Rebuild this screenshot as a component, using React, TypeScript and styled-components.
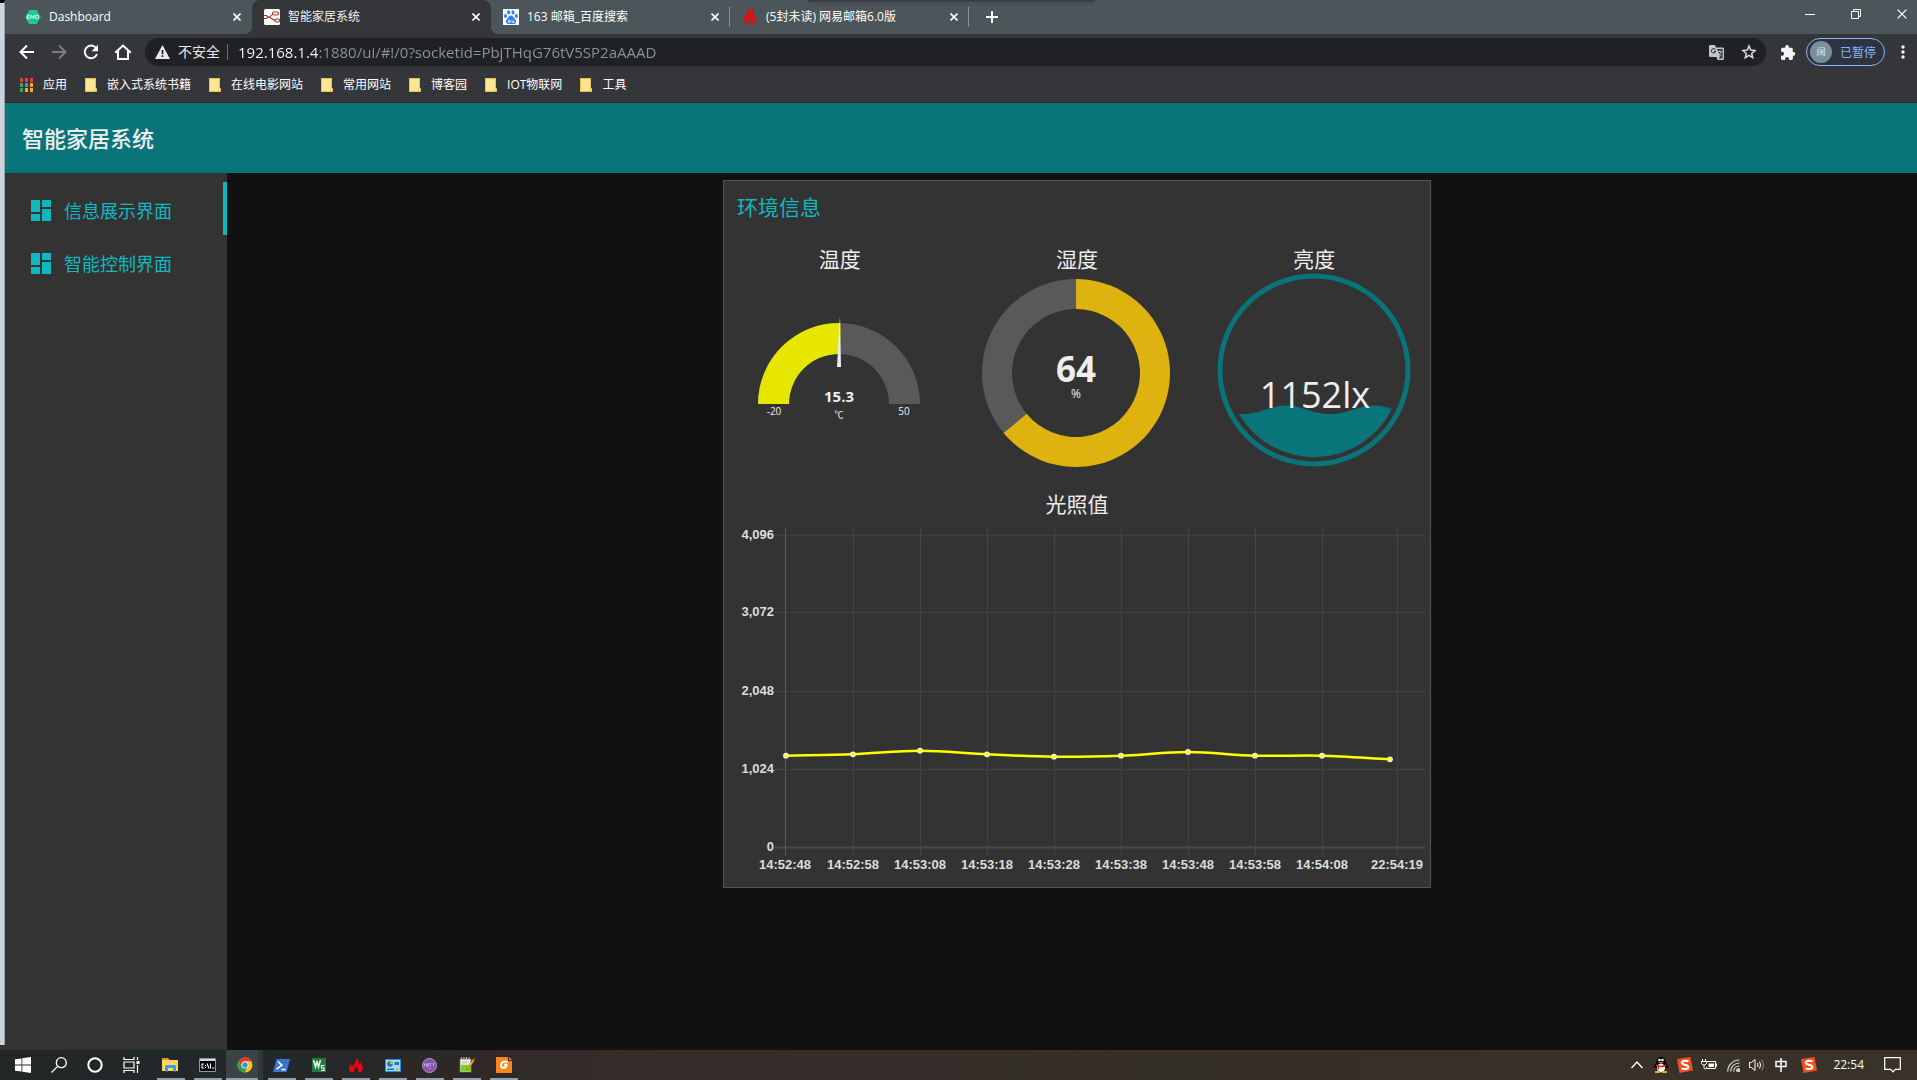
import React from "react";
import styled, { createGlobalStyle, css } from "styled-components";

const GlobalStyle = createGlobalStyle`
  * { box-sizing: border-box; }
  html, body { margin: 0; padding: 0; background: #111111; }
  body { font-family: "Open Sans", "Noto Sans CJK SC", sans-serif; color: #eeeeee; }
  button { border: 0; padding: 0; margin: 0; background: none; color: inherit; font: inherit; display: flex; align-items: center; }
  a { color: inherit; text-decoration: none; }
  svg { display: block; flex: none; }
`;

const Desktop = styled.div`
  min-height: 100vh;
  display: flex;
  flex-direction: column;
`;

const Screen = styled.div`
  flex: 1;
  display: flex;
  background: #3a3428;
`;

const WindowBehind = styled.div`
  width: 5px;
  margin-bottom: 5px;
  background: #ccd4e0;
  border-top: 3px solid #000000;
  border-right: 1px solid #9aa2b0;
`;

const BrowserWindow = styled.div`
  flex: 1;
  min-width: 0;
  display: flex;
  flex-direction: column;
`;

/* ---------- browser chrome ---------- */

const TabStrip = styled.div`
  position: relative;
  height: 34px;
  display: flex;
  align-items: stretch;
  padding-left: 8px;
  background: #4c555a;
`;

const TopShadow = styled.span`
  position: absolute;
  top: 0;
  left: 42%;
  width: 15%;
  height: 2px;
  background: linear-gradient(#30353a, #454d52);
  box-shadow: 0 0 4px #3a4146;
`;

const tabFeet = css`
  &::before,
  &::after {
    content: "";
    position: absolute;
    bottom: 0;
    width: 8px;
    height: 8px;
  }
  &::before {
    right: 100%;
    background: radial-gradient(circle at 0 0, transparent 8px, #35363a 8px);
  }
  &::after {
    left: 100%;
    background: radial-gradient(circle at 100% 0, transparent 8px, #35363a 8px);
  }
`;

const tabDivider = css`
  &::after {
    content: "";
    position: absolute;
    right: 0;
    top: 7px;
    width: 1px;
    height: 20px;
    background: #8b9195;
  }
`;

const Tab = styled.div<{ $active?: boolean; $divider?: boolean }>`
  position: relative;
  width: 239px;
  display: flex;
  align-items: center;
  padding: 0 11px 0 12px;
  color: ${(p) => (p.$active ? "#f1f3f4" : "#ffffff")};
  background: ${(p) => (p.$active ? "#35363a" : "transparent")};
  border-radius: 8px 8px 0 0;
  ${(p) => p.$active && tabFeet}
  ${(p) => p.$divider && tabDivider}
`;

const TabTitle = styled.button`
  flex: 1;
  gap: 8px;
  height: 28px;
  font-size: 12px;
  line-height: 16px;
  white-space: nowrap;
`;

const IconButton = styled.button<{ $w: number; $color?: string }>`
  width: ${(p) => p.$w}px;
  height: 28px;
  justify-content: center;
  color: ${(p) => p.$color ?? "#ffffff"};
`;

const NewTabButton = styled(IconButton)`
  height: 34px;
`;

const WindowControls = styled.div`
  margin-left: auto;
  display: flex;
  gap: 16px;
  height: 28px;
`;

const Toolbar = styled.div`
  height: 36px;
  display: flex;
  align-items: center;
  padding-left: 4px;
  background: #35363a;
`;

const Omnibox = styled.div`
  flex: 1;
  height: 28px;
  display: flex;
  align-items: center;
  margin: 0 6px 0 8px;
  padding-left: 10px;
  border-radius: 14px;
  background: #202124;
`;

const SecurityLabel = styled.label`
  display: flex;
  align-items: center;
  gap: 8px;
  padding-right: 7px;
  border-right: 1px solid #6a6d71;
  font-size: 14px;
  line-height: 16px;
  color: #e8eaed;
  white-space: nowrap;
`;

const UrlInput = styled.input`
  flex: 1;
  min-width: 0;
  margin-left: 10px;
  padding: 0;
  border: 0;
  outline: 0;
  font: 15px/20px "Open Sans", sans-serif;
  color: transparent;
  background: linear-gradient(90deg, #ffffff 80px, #8f9499 80px);
  -webkit-background-clip: text;
  background-clip: text;
`;

const ProfileChip = styled.button`
  && {
    margin: 0 4px 0 2px;
    padding-left: 3px;
    border: 1px solid #8ab4f8;
  }
  width: 79px;
  height: 28px;
  gap: 8px;
  border-radius: 14px;
  background: #2e3340;
  color: #8ab4f8;
  font-size: 12px;
  white-space: nowrap;
`;

const Avatar = styled.span`
  width: 22px;
  height: 22px;
  border-radius: 50%;
  background: #78909c;
  color: #e8eef0;
  font-size: 9px;
  line-height: 22px;
  text-align: center;
`;

const BookmarkBar = styled.nav`
  height: 33px;
  display: flex;
  align-items: center;
  gap: 18px;
  padding: 0 0 3px 15px;
  background: #35363a;
  border-bottom: 1px solid #28292c;
`;

const Bookmark = styled.a`
  display: flex;
  align-items: center;
  gap: 10px;
  font-size: 12px;
  line-height: 16px;
  color: #ffffff;
  white-space: nowrap;
`;

/* ---------- dashboard page ---------- */

const PageHeader = styled.header`
  height: 70px;
  display: flex;
  align-items: center;
  padding-left: 17px;
  background: #097479;
`;

const PageTitle = styled.h1`
  margin: 0;
  font-size: 22px;
  line-height: 32px;
  font-weight: 500;
  color: #eeeeee;
`;

const PageBody = styled.div`
  flex: 1;
  display: flex;
  background: #111111;
`;

const SideNav = styled.nav`
  width: 222px;
  padding-top: 9px;
  background: #333333;
`;

const NavItem = styled.a<{ $active?: boolean }>`
  height: 53px;
  display: flex;
  align-items: center;
  gap: 13px;
  padding: 4px 0 0 26px;
  border-right: 4px solid ${(p) => (p.$active ? "#0eb8c0" : "transparent")};
  font-size: 18px;
  line-height: 28px;
  color: #0eb8c0;
`;

const Main = styled.main`
  flex: 1;
  display: flex;
  justify-content: center;
  align-items: flex-start;
  padding: 7px 0 7px 10px;
`;

const Panel = styled.section`
  width: 708px;
  display: flex;
  flex-direction: column;
  padding-top: 12px;
  background: #333333;
  border: 1px solid #555555;
`;

const PanelTitle = styled.h2`
  margin: 0 0 24px;
  padding-left: 13px;
  font-size: 21px;
  line-height: 28px;
  font-weight: 400;
  color: #0eb8c0;
`;

const WidgetRow = styled.div`
  display: grid;
  grid-template-columns: repeat(3, 1fr);
  gap: 6px;
  margin-bottom: 17px;
`;

const Widget = styled.div`
  display: flex;
  flex-direction: column;
  align-items: center;
`;

const WidgetTitle = styled.h3`
  margin: 0;
  font-size: 21px;
  line-height: 28px;
  font-weight: 400;
  color: #eeeeee;
`;

const Drawing = styled.svg`
  font-family: "Open Sans", "Noto Sans CJK SC", sans-serif;
  fill: #eeeeee;
`;

const ChartDrawing = styled.svg`
  width: 100%;
  font: bold 13px "Liberation Sans", sans-serif;
  fill: #dddddd;
`;

/* ---------- taskbar ---------- */

const Taskbar = styled.footer`
  height: 30px;
  display: flex;
  padding-left: 5px;
  background: linear-gradient(90deg, #222627 0%, #22282a 14%, #2c2827 22%, #342d2a 32%, #352f29 60%, #38322a 100%);
`;

const SystemButton = styled.button`
  width: 36px;
  height: 30px;
  justify-content: center;
`;

const AppButton = styled.button<{ $active?: boolean }>`
  && {
    background: ${(p) =>
      p.$active
        ? "linear-gradient(#93a1ad, #93a1ad) 0 100% / 32px 2px no-repeat, linear-gradient(90deg, #3b4347 32px, #2e3639 32px)"
        : "linear-gradient(#93a1ad, #93a1ad) 50% 100% / 28px 2px no-repeat"};
  }
  width: 37px;
  height: 30px;
  justify-content: center;
`;

const Apps = styled.div`
  display: flex;
  margin-left: 3px;
`;

const Tray = styled.div`
  margin-left: auto;
  display: flex;
  align-items: center;
  padding-right: 9px;
`;

const TrayButton = styled.button<{ $w?: number }>`
  width: ${(p) => p.$w ?? 24}px;
  height: 30px;
  justify-content: center;
`;

const Clock = styled.time`
  margin: 0 12px 0 8px;
  font-size: 12px;
  line-height: 16px;
  color: #ffffff;
`;

/* ---------- icons ---------- */

const CloseIcon = ({ size = 8, width = 1.6 }: { size?: number; width?: number }) => (
  <svg width={size} height={size} viewBox="0 0 8 8" stroke="currentColor" strokeWidth={width} fill="none">
    <path d="M.5.5l7 7M7.5.5l-7 7" />
  </svg>
);

const EmqIcon = () => (
  <svg width="16" height="16" viewBox="0 0 16 16">
    <path d="M4.3 1h7.4L15.8 8l-4.1 7H4.3L.2 8z" fill="#1fc98f" />
    <path d="M4.800 6.200H2.600L2 9.800h2.400M2.300 8h2M5.600 9.800l.6-3.6 1.200 2.300 1.800-2.300-.5 3.600" stroke="#e8fff6" strokeWidth=".9" fill="none" />
    <ellipse cx="12" cy="8" rx="1.500" ry="1.800" stroke="#e8fff6" strokeWidth=".9" fill="none" />
  </svg>
);

const NodeRedIcon = () => (
  <svg width="16" height="16" viewBox="0 0 16 16" fill="none" stroke="#a3302f" strokeWidth="1.1">
    <rect width="16" height="16" rx="1.5" fill="#fff" stroke="none" />
    <path d="M0 8h4c4 0 3-3.500 7-3.500M4 8c4 0 4 3.500 8 3.500" />
    <rect x="8.500" y="3" width="6" height="3" rx="1.4" fill="#fff" />
    <rect x="11" y="10" width="4.500" height="3" rx="1.4" fill="#fff" />
    <path d="M0 6.500h2.500L4 8 2.500 9.500H0" fill="#fff" />
  </svg>
);

const BaiduIcon = () => (
  <svg width="16" height="16" viewBox="0 0 16 16">
    <rect width="16" height="16" fill="#fff" />
    <g fill="#2f7cf0">
      <ellipse cx="5.600" cy="3.400" rx="1.500" ry="2.100" />
      <ellipse cx="10" cy="3.400" rx="1.500" ry="2.100" />
      <ellipse cx="2.500" cy="7" rx="1.500" ry="2" />
      <ellipse cx="13.300" cy="7" rx="1.500" ry="2" />
      <path d="M8 6.500c2 0 2.500 2 4 3.500 2 2 1 5-1.500 5H5.500C3 15 2 12 4 10c1.500-1.500 2-3.500 4-3.500z" />
    </g>
    <path d="M7 10.500v3H5.300v-2H7M9 11.200v2.300h1.800v-2.300" stroke="#fff" strokeWidth=".8" fill="none" />
  </svg>
);

const NeteaseIcon = () => (
  <svg width="16" height="16" viewBox="0 0 16 16" fill="none" stroke="#ff0000" strokeWidth="1.600">
    <path d="M7 1.200c-2.500.6-3 5 0 5h2.500c3 0 2.500-4.800-.5-5zM6 3.800h4M2 8h11.500M5.500 8C5 10 3.500 11 2 11.500M13 8c1.500 3 .5 6.500-3 6.500M8 9c-.5 2.500-2.500 4.500-5.500 5.500M11 9c-.3 2.500-1.800 4.500-4 5.500" />
  </svg>
);

const ArrowIcon = ({ flip }: { flip?: boolean }) => (
  <svg width="16" height="16" viewBox="0 0 16 16" fill="none" stroke="currentColor" strokeWidth="2">
    {flip ? <path d="M1 8h13M8 1.500L14.500 8 8 14.500" /> : <path d="M15 8H2M8 1.500L1.500 8 8 14.500" />}
  </svg>
);

const ReloadIcon = () => (
  <svg width="16" height="16" viewBox="0 0 16 16">
    <path d="M13 4A6.300 6.300 0 1 0 14 10" fill="none" stroke="currentColor" strokeWidth="2" />
    <path d="M15 .8v6.400H8.600z" fill="currentColor" />
  </svg>
);

const HomeIcon = () => (
  <svg width="18" height="16" viewBox="0 0 18 16" fill="none" stroke="currentColor" strokeWidth="2">
    <path d="M1.200 8.800L9 1.500l7.800 7.300M4 7v8h10V7" />
  </svg>
);

const WarningIcon = () => (
  <svg width="15" height="14" viewBox="0 0 15 14">
    <path d="M7.500 0L15 14H0z" fill="#e8eaed" />
    <path d="M7.500 5v4.200M7.500 10.200v1.800" stroke="#202124" strokeWidth="1.700" />
  </svg>
);

const TranslateIcon = () => (
  <svg width="15" height="15" viewBox="0 0 15 15">
    <path d="M0 1.200C0 .5.500 0 1.200 0H6l1 2.500h6.500c.8 0 1.500.6 1.500 1.500v9.500c0 .8-.7 1.500-1.500 1.500H8.500L7.500 12H1.200C.5 12 0 11.500 0 10.800z" fill="#c4c7ca" />
    <path d="M8 4h5.600v9.500H9.700l1.300-2z" fill="#34363a" />
    <path d="M6.500 4.800A2.200 2.200 0 1 0 6.700 6.500H4.800" fill="none" stroke="#202124" strokeWidth="1" />
    <path d="M8.500 6.500h4.500M10.700 5.500v1M12.300 6.500c-.5 2-1.800 3.300-2.800 4M9.500 8.200c1 1.500 2 2.300 3 2.800" fill="none" stroke="#c4c7ca" strokeWidth=".9" />
  </svg>
);

const StarIcon = () => (
  <svg width="16" height="16" viewBox="0 0 16 16" fill="none" stroke="#dadce0" strokeWidth="1.500">
    <path d="M8 2l1.700 4.100 4.300.4-3.300 2.900 1 4.300L8 11.400l-3.700 2.300 1-4.300L2 6.500l4.300-.4z" />
  </svg>
);

const PuzzleIcon = () => (
  <svg width="15" height="15" viewBox="0 0 15 15" fill="#f1f3f4">
    <path d="M12.800 7h-1V4.200c0-.8-.6-1.400-1.400-1.400H8V2A1.900 1.900 0 0 0 4.200 2v.8H1.500C.8 2.800.1 3.400.1 4.200v2.600h1a2 2 0 0 1 0 4H0v2.700c0 .8.700 1.400 1.500 1.400h2.600v-1a2 2 0 0 1 4 0v1h2.400c.8 0 1.400-.6 1.400-1.400v-2.800h1a1.900 1.900 0 0 0 0-3.700z" />
  </svg>
);

const DotsIcon = () => (
  <svg width="4" height="14" viewBox="0 0 4 14" fill="#f1f3f4">
    <circle cx="2" cy="2" r="1.700" />
    <circle cx="2" cy="7" r="1.700" />
    <circle cx="2" cy="12" r="1.700" />
  </svg>
);

const appDots = ["#ee3b2f", "#ee3b2f", "#ee3b2f", "#36a853", "#3f8df5", "#f5a912", "#36a853", "#f5a912", "#f5a912"];

const AppsIcon = () => (
  <svg width="13" height="14" viewBox="0 0 13 14">
    {appDots.map((c, i) => (
      <rect key={i} x={(i % 3) * 5} y={Math.floor(i / 3) * 5} width="3" height="4" fill={c} />
    ))}
  </svg>
);

const FolderIcon = () => (
  <svg width="12" height="14" viewBox="0 0 12 14">
    <path d="M0 0h11v10l1 .5V14H0z" fill="#e9c14c" />
    <path d="M1 1h9v9l-1 3H1z" fill="#ffe694" />
    <path d="M10 10.500h1.300V13H10z" fill="#ffe694" />
  </svg>
);

const DashboardIcon = () => (
  <svg width="20" height="21" viewBox="0 0 20 21" fill="#0eb8c0">
    <rect width="9" height="12" />
    <rect y="14" width="9" height="7" />
    <rect x="11" width="9" height="7" />
    <rect x="11" y="9" width="9" height="12" />
  </svg>
);

/* ---------- widgets ---------- */

function ringPath(cx: number, cy: number, outer: number, inner: number, from: number, to: number) {
  const point = (r: number, deg: number) => {
    const a = ((deg - 90) * Math.PI) / 180;
    return `${(cx + r * Math.cos(a)).toFixed(2)} ${(cy + r * Math.sin(a)).toFixed(2)}`;
  };
  const large = to - from > 180 ? 1 : 0;
  return `M${point(outer, from)}A${outer} ${outer} 0 ${large} 1 ${point(outer, to)}L${point(inner, to)}A${inner} ${inner} 0 ${large} 0 ${point(inner, from)}Z`;
}

const TemperatureGauge = () => (
  <Drawing width="231" height="200" viewBox="0 0 231 200" textAnchor="middle">
    <path d={ringPath(115, 131, 81, 50, -90, 90)} fill="#595959" />
    <path d={ringPath(115, 131, 81, 50, -90, 1)} fill="#e6e600" />
    <path d="M116 43l1 51h-4z" />
    <text x="115" y="129" fontSize="15" fontWeight="700">15.3</text>
    <text x="115" y="145" fontSize="9">℃</text>
    <text x="50" y="142" fontSize="10">-20</text>
    <text x="180" y="142" fontSize="10">50</text>
  </Drawing>
);

const HumidityDonut = () => (
  <Drawing width="231" height="200" viewBox="0 0 231 200" textAnchor="middle">
    <path d={ringPath(115, 100, 94, 64, 230.4, 360)} fill="#595959" />
    <path d={ringPath(115, 100, 94, 64, 0, 230.4)} fill="#deb30f" />
    <text x="115" y="109" fontSize="35" fontWeight="700">64</text>
    <text x="115" y="125" fontSize="12">%</text>
  </Drawing>
);

const LightLevel = () => (
  <Drawing width="231" height="200" viewBox="0 0 231 200" textAnchor="middle">
    <circle cx="115" cy="97" r="94" fill="none" stroke="#097479" strokeWidth="5" />
    <path d="M40 141C60 142 72 132 88 132.500S112 141 131 141s28-8.500 45-8.500q9 0 17 3.500A87 87 0 0 1 40 141z" fill="#097479" />
    <text x="116" y="135" fontSize="36">1152lx</text>
  </Drawing>
);

const yTicks: [string, number][] = [["4,096", 18], ["3,072", 95], ["2,048", 174], ["1,024", 252], ["0", 330]];
const xTicks: [string, number][] = [
  ["14:52:48", 61], ["14:52:58", 129], ["14:53:08", 196], ["14:53:18", 263], ["14:53:28", 330],
  ["14:53:38", 397], ["14:53:48", 464], ["14:53:58", 531], ["14:54:08", 598], ["22:54:19", 673],
];
const readings: [number, number][] = [
  [62, 237.7], [129, 236.3], [196, 232.7], [263, 236.3], [330, 238.7],
  [397, 237.7], [464, 234], [531, 237.7], [598, 237.7], [666, 241.3],
];

const readingsPath = readings.reduce((d, [x, y], i) => {
  if (i === 0) return `M${x} ${y}`;
  const [px, py] = readings[i - 1];
  const slope = (k: number) => {
    const a = readings[Math.max(0, k - 1)];
    const b = readings[Math.min(readings.length - 1, k + 1)];
    return (b[1] - a[1]) / (b[0] - a[0]);
  };
  const h = (x - px) / 3;
  return `${d}C${px + h} ${py + h * slope(i - 1)} ${x - h} ${y - h * slope(i)} ${x} ${y}`;
}, "");

const LightChart = () => (
  <ChartDrawing viewBox="0 0 706 369">
    {yTicks.map(([label, y]) => (
      <g key={label}>
        <path d={`M51 ${y - 0.5}H701`} stroke={label === "0" ? "#4a4a4a" : "#414141"} strokeWidth={label === "0" ? 2 : 1.5} />
        <text x="50" y={y + 3} textAnchor="end">{label}</text>
      </g>
    ))}
    {xTicks.map(([label, x], i) => (
      <g key={label}>
        <path d={`M${x + 0.5} 10V338`} stroke={i === 0 ? "#5c5c5c" : "#434343"} />
        <text x={x} y="351" textAnchor="middle">{label}</text>
      </g>
    ))}
    <path d={readingsPath} fill="none" stroke="#ffff00" strokeWidth="2.500" />
    {readings.map(([x, y]) => (
      <circle key={x} cx={x} cy={y} r="2.300" fill="#ffff00" stroke="#f4f4d8" strokeWidth="1.200" />
    ))}
  </ChartDrawing>
);

/* ---------- taskbar icons ---------- */

const WindowsIcon = () => (
  <svg width="16" height="16" viewBox="0 0 16 16" fill="#ffffff">
    <path d="M0 2.300l6.500-.9v6.200H0zM7.300 1.300L16 0v7.600H7.300zM0 8.400h6.500v6.200L0 13.700zM7.300 8.400H16V16l-8.700-1.300z" />
  </svg>
);
const SearchIcon = () => (
  <svg width="16" height="16" viewBox="0 0 16 16" fill="none" stroke="#fff" strokeWidth="1.300">
    <circle cx="10.300" cy="5.700" r="5" />
    <path d="M6.600 9.400L.5 15.500" />
  </svg>
);
const CortanaIcon = () => (
  <svg width="16" height="16" viewBox="0 0 16 16" fill="none" stroke="#fff" strokeWidth="2">
    <circle cx="8" cy="8" r="6.700" />
  </svg>
);
const TaskViewIcon = () => (
  <svg width="17" height="16" viewBox="0 0 17 16" fill="none" stroke="#fff" strokeWidth="1.200">
    <path d="M1 0v2.500h10V0M1 5h10v6H1zM1 16v-2.500h10V16M14.500 0v3M14.500 8v8" />
    <path d="M13.500 4h3v3h-3z" fill="#fff" stroke="none" />
  </svg>
);
const ExplorerIcon = () => (
  <svg width="17" height="14" viewBox="0 0 17 14">
    <path d="M0 0h6l2 2h-8z" fill="#d99a1c" />
    <path d="M0 2h16v11H0z" fill="#fcd462" />
    <path d="M3 13.500V8.500C3 7.500 3.700 7 4.500 7h8c.8 0 1.500.5 1.500 1.500v5h-3V10H6v3.500z" fill="#3d9be0" />
  </svg>
);
const TerminalIcon = () => (
  <svg width="17" height="14" viewBox="0 0 17 14">
    <path d="M.5.5h16v13H.5z" fill="#000" stroke="#8e959b" />
    <path d="M1 1h15v2H1z" fill="#d5dae0" />
    <path d="M5 6H3v4h2M6.500 7v1M6.500 9v1M8 5.500l2 5M11.500 5.500v5M13 10h2.500" stroke="#fff" fill="none" strokeWidth="1.100" />
  </svg>
);
const ChromeIcon = () => (
  <svg width="16" height="16" viewBox="0 0 16 16">
    <circle cx="8" cy="8" r="7.500" fill="#fbc116" />
    <path d="M1.500 4.200A7.500 7.500 0 0 0 7.500 15.500L11 9.800 8 8 5 9.500z" fill="#2ba24c" />
    <path d="M8 .5a7.500 7.500 0 0 1 6.500 3.800H8A3.600 3.600 0 0 0 4.700 9L1.500 4.200A7.500 7.500 0 0 1 8 .5z" fill="#e33b2e" />
    <circle cx="8" cy="8" r="3.500" fill="#fff" />
    <circle cx="8" cy="8" r="2.700" fill="#4285f4" />
  </svg>
);
const PowerShellIcon = () => (
  <svg width="17" height="13" viewBox="0 0 17 13">
    <path d="M3.500 0H17l-3.300 13H0z" fill="#3a74d0" />
    <path d="M5 2.500l4 3.700-5.500 4M8.500 10.500h4" stroke="#fff" strokeWidth="1.500" fill="none" />
  </svg>
);
const WsIcon = () => (
  <svg width="14" height="14" viewBox="0 0 14 14" fill="none">
    <path d="M0 0h14v14H0z" fill="#1e7a3d" />
    <path d="M1.500 2l2 7 1.500-6 1.500 6 2-7" stroke="#e6f4ea" strokeWidth="1.500" />
    <path d="M12.500 7.500h-3V10h2.500v2.500H9" stroke="#fff" strokeWidth="1.200" />
  </svg>
);
const FlameIcon = () => (
  <svg width="14" height="14" viewBox="0 0 14 14">
    <path d="M7 0c3 2 3 4 2.500 6 1 0 1.500-1 1.500-2 3 3 4 7 1 10H9c1-2 0-4-2-5-1.500 1.500-2.500 3-1.500 5H2C-1 11 0 8 2 6c0 1 .5 2 1.500 2C6 5.500 7.500 3 7 0z" fill="#e50914" />
  </svg>
);
const ControlPanelIcon = () => (
  <svg width="16" height="13" viewBox="0 0 16 13">
    <path d="M.5.500h15v12H.5z" fill="#9fdcfb" stroke="#2b8fd6" />
    <circle cx="5" cy="5" r="2.800" fill="#1976c8" />
    <path d="M5 5V2.200A2.800 2.800 0 0 1 7.800 5z" fill="#f6a623" />
    <path d="M9.500 3h4.500v3H9.500zM2 9.500h7v1.500H2z" fill="#1976c8" />
    <path d="M10 9.500h4v1.500h-4z" fill="#f6a623" />
  </svg>
);
const MqttIcon = () => (
  <svg width="15" height="15" viewBox="0 0 15 15">
    <circle cx="7.500" cy="7.500" r="7" fill="#8b4fb0" stroke="#a89bb0" />
    <path d="M2.500 8.500v-3l1 1.500 1-1.500v3M6.500 5.500h-1v3h1zM7.500 5.500h2M8.500 5.500v3M10.500 5.500h2M11.500 5.500v3M6.500 10.500h2" stroke="#cfb2e0" strokeWidth=".7" fill="none" />
  </svg>
);
const NotepadIcon = () => (
  <svg width="16" height="16" viewBox="0 0 16 16">
    <path d="M1 2h11v13H1z" fill="#f4f7f0" stroke="#777" strokeWidth=".8" />
    <path d="M1.500 8H12v6.500H1.500z" fill="#7ed321" />
    <path d="M2.500 0v3M5 0v3M7.500 0v3M10 0v3" stroke="#bbb" />
    <path d="M3 5h7M3 7h5" stroke="#999" strokeWidth=".7" />
    <path d="M8 11l6-9 1.700 1.100-6 9-2 .9z" fill="#f5b82e" stroke="#7a4b12" strokeWidth=".5" />
    <path d="M13.500 2.500L14.700.6l1.300.9-1 1.900z" fill="#d9262c" />
  </svg>
);
const FoxitIcon = () => (
  <svg width="16" height="16" viewBox="0 0 16 16">
    <path d="M0 0h12v4h4v12H0z" fill="#f7861c" />
    <path d="M13 0l3 3h-3z" fill="#f7861c" />
    <path d="M11.500 4.800c-4-1.300-6.500.8-6.500 3.700 0 3.500 5.500 3 5.500-.8H8" stroke="#fff" strokeWidth="2" fill="none" />
  </svg>
);

const QQIcon = () => (
  <svg width="16" height="16" viewBox="0 0 16 16">
    <path d="M8 0c3 0 4.500 2 4.500 5 1.500 2 3 4 2.500 6-1 .5-1.500-.5-2-1 0 3-1.500 5-5 5s-5-2-5-5c-.5.500-1 1.500-2 1C.5 9 2 7 3.500 5c0-3 1.500-5 4.500-5z" fill="#050505" />
    <ellipse cx="8" cy="11" rx="4.200" ry="4.200" fill="#fff" />
    <circle cx="6.500" cy="3" r="1.300" fill="#fff" />
    <circle cx="9.500" cy="3" r="1.300" fill="#fff" />
    <path d="M5 5.300h6L8 6.800zM2 14h5v2H2zM9 14h5v2H9z" fill="#f7a81b" />
    <path d="M3 7.500c3 1.500 7 1.500 10 0v1.700c-2.500 1.200-5 1.300-7 1v2H4.500V9.500L3 9z" fill="#e2231a" />
  </svg>
);
const SogouIcon = () => (
  <svg width="16" height="16" viewBox="0 0 16 16">
    <path d="M0 2L13.500 0 16 13.500 2.500 16z" fill="#f04e1c" />
    <path d="M11.500 4.300C8 3 4.500 4 4.800 6c.4 2 6.400 1.500 6.600 3.800.2 2.200-3.500 2.700-6.800 1.600" stroke="#fff" strokeWidth="2" fill="none" />
  </svg>
);
const BatteryIcon = () => (
  <svg width="16" height="12" viewBox="0 0 16 12" fill="none" stroke="#fff">
    <path d="M6 2.500h8.500v7h-9V8" />
    <path d="M7.500 4.500H13v3.500H7.500z" fill="#fff" stroke="none" />
    <path d="M15.500 4.500v3M1.500 0v2.500M4.500 0v2.500M.5 2.500h5v2L4 6H2L.5 4.500zM3 6v2.500c0 1 .5 1.500 2 1.500" />
  </svg>
);
const WifiIcon = () => (
  <svg width="13" height="13" viewBox="0 0 13 13" fill="none" stroke="#d8d8d8" strokeWidth="1.200">
    <path d="M.7 12.500C.7 6 6 1 12.500 1M3.700 12.500c0-5 4-8.500 8.800-8.500M6.700 12.500c0-3.500 2.600-5.500 5.800-5.500M9.500 12.500c0-1.800 1.200-2.800 3-2.800" />
    <circle cx="11.700" cy="11.700" r="1" fill="#fff" />
  </svg>
);
const VolumeIcon = () => (
  <svg width="16" height="14" viewBox="0 0 16 14" fill="none" stroke="#fff">
    <path d="M.5 4.500h2L6 1.500v11L2.500 9.500h-2z" />
    <path d="M8.500 5q1.200 2 0 4M10.500 3.500q2.200 3.500 0 7" />
    <path d="M12.700 1.800q3.400 5.200 0 10.400" stroke="#8d8984" />
  </svg>
);
const NotificationIcon = () => (
  <svg width="17" height="16" viewBox="0 0 17 16" fill="none" stroke="#fff" strokeWidth="1.200">
    <path d="M.7.7h15.600v11.600h-5l-2.300 2.500-2.300-2.500h-6z" />
  </svg>
);
const ChevronIcon = () => (
  <svg width="12" height="8" viewBox="0 0 12 8" fill="none" stroke="#fff" strokeWidth="1.300">
    <path d="M.5 7L6 1l5.500 6" />
  </svg>
);

const tabs = [
  { title: "Dashboard", icon: <EmqIcon /> },
  { title: "智能家居系统", icon: <NodeRedIcon />, active: true },
  { title: "163 邮箱_百度搜索", icon: <BaiduIcon />, divider: true },
  { title: "(5封未读) 网易邮箱6.0版", icon: <NeteaseIcon />, divider: true },
];

const bookmarks = ["嵌入式系统书籍", "在线电影网站", "常用网站", "博客园", "IOT物联网", "工具"];

const taskbarApps = [
  { name: "文件资源管理器", icon: <ExplorerIcon /> },
  { name: "命令提示符", icon: <TerminalIcon /> },
  { name: "Chrome", icon: <ChromeIcon />, active: true },
  { name: "PowerShell", icon: <PowerShellIcon /> },
  { name: "WebStorm", icon: <WsIcon /> },
  { name: "Flame", icon: <FlameIcon /> },
  { name: "控制面板", icon: <ControlPanelIcon /> },
  { name: "MQTT", icon: <MqttIcon /> },
  { name: "Notepad++", icon: <NotepadIcon /> },
  { name: "Foxit", icon: <FoxitIcon /> },
];

export default function App() {
  return (
    <Desktop>
      <GlobalStyle />
      <Screen>
        <WindowBehind />
        <BrowserWindow>
          <TabStrip>
            <TopShadow />
            {tabs.map((t) => (
              <Tab key={t.title} $active={t.active} $divider={t.divider}>
                <TabTitle>
                  {t.icon}
                  {t.title}
                </TabTitle>
                <IconButton $w={8} aria-label="关闭标签页"><CloseIcon /></IconButton>
              </Tab>
            ))}
            <NewTabButton $w={46} aria-label="新标签页">
              <svg width="12" height="12" viewBox="0 0 12 12" stroke="currentColor" strokeWidth="2"><path d="M6 0v12M0 6h12" /></svg>
            </NewTabButton>
            <WindowControls>
              <IconButton $w={30} aria-label="最小化">
                <svg width="10" height="10" viewBox="0 0 10 10" stroke="currentColor"><path d="M0 5.500h10" /></svg>
              </IconButton>
              <IconButton $w={30} aria-label="还原">
                <svg width="10" height="10" viewBox="0 0 10 10" stroke="currentColor" fill="none"><path d="M.5 2.500h7v7h-7zM2.500 2.500v-2h7v7h-2" /></svg>
              </IconButton>
              <IconButton $w={30} aria-label="关闭"><CloseIcon size={10} width={1} /></IconButton>
            </WindowControls>
          </TabStrip>

          <Toolbar>
            <IconButton $w={36} aria-label="后退"><ArrowIcon /></IconButton>
            <IconButton $w={28} $color="#7c7d80" aria-label="前进"><ArrowIcon flip /></IconButton>
            <IconButton $w={36} aria-label="重新加载"><ReloadIcon /></IconButton>
            <IconButton $w={28} aria-label="主页"><HomeIcon /></IconButton>
            <Omnibox>
              <SecurityLabel htmlFor="url"><WarningIcon />不安全</SecurityLabel>
              <UrlInput id="url" defaultValue="192.168.1.4:1880/ui/#!/0?socketid=PbjTHqG76tV5SP2aAAAD" />
              <IconButton $w={32} aria-label="翻译"><TranslateIcon /></IconButton>
              <IconButton $w={34} aria-label="收藏"><StarIcon /></IconButton>
            </Omnibox>
            <IconButton $w={32} aria-label="扩展程序"><PuzzleIcon /></IconButton>
            <ProfileChip><Avatar>阔</Avatar>已暂停</ProfileChip>
            <IconButton $w={28} aria-label="更多"><DotsIcon /></IconButton>
          </Toolbar>

          <BookmarkBar>
            <Bookmark href="#"><AppsIcon />应用</Bookmark>
            {bookmarks.map((b) => (
              <Bookmark href="#" key={b}><FolderIcon />{b}</Bookmark>
            ))}
          </BookmarkBar>

          <PageHeader><PageTitle>智能家居系统</PageTitle></PageHeader>
          <PageBody>
            <SideNav>
              <NavItem href="#" $active><DashboardIcon />信息展示界面</NavItem>
              <NavItem href="#"><DashboardIcon />智能控制界面</NavItem>
            </SideNav>
            <Main>
              <Panel>
                <PanelTitle>环境信息</PanelTitle>
                <WidgetRow>
                  <Widget><WidgetTitle>温度</WidgetTitle><TemperatureGauge /></Widget>
                  <Widget><WidgetTitle>湿度</WidgetTitle><HumidityDonut /></Widget>
                  <Widget><WidgetTitle>亮度</WidgetTitle><LightLevel /></Widget>
                </WidgetRow>
                <Widget><WidgetTitle>光照值</WidgetTitle><LightChart /></Widget>
              </Panel>
            </Main>
          </PageBody>
        </BrowserWindow>
      </Screen>

      <Taskbar>
        <SystemButton aria-label="开始"><WindowsIcon /></SystemButton>
        <SystemButton aria-label="搜索"><SearchIcon /></SystemButton>
        <SystemButton aria-label="Cortana"><CortanaIcon /></SystemButton>
        <SystemButton aria-label="任务视图"><TaskViewIcon /></SystemButton>
        <Apps>
          {taskbarApps.map((a) => (
            <AppButton key={a.name} $active={a.active} aria-label={a.name}>{a.icon}</AppButton>
          ))}
        </Apps>
        <Tray>
          <TrayButton aria-label="显示隐藏的图标"><ChevronIcon /></TrayButton>
          <TrayButton aria-label="QQ"><QQIcon /></TrayButton>
          <TrayButton aria-label="搜狗"><SogouIcon /></TrayButton>
          <TrayButton aria-label="电源"><BatteryIcon /></TrayButton>
          <TrayButton aria-label="网络"><WifiIcon /></TrayButton>
          <TrayButton aria-label="音量"><VolumeIcon /></TrayButton>
          <TrayButton aria-label="输入法">
            <svg width="12" height="14" viewBox="0 0 12 14" fill="none" stroke="#fff" strokeWidth="1.500"><path d="M1 3.500h10v5H1zM6 0v14" /></svg>
          </TrayButton>
          <TrayButton $w={32} aria-label="搜狗输入法"><SogouIcon /></TrayButton>
          <Clock>22:54</Clock>
          <TrayButton $w={32} aria-label="通知"><NotificationIcon /></TrayButton>
        </Tray>
      </Taskbar>
    </Desktop>
  );
}
